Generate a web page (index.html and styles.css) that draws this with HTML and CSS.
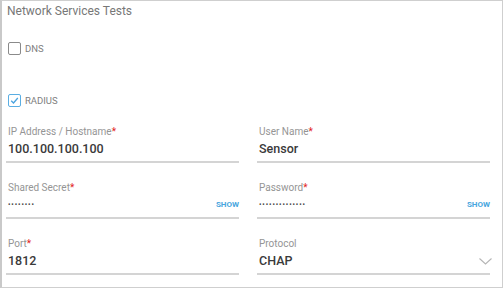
FILE: index.html
```html
<!DOCTYPE html>
<html>
<head>
<meta charset="utf-8">
<link rel="stylesheet" href="styles.css">
</head>
<body>
<div class="panel">
  <div class="title">Network Services Tests</div>
  <div class="check-row first">
    <span class="box"></span><span class="check-label">DNS</span>
  </div>
  <div class="check-row second">
    <span class="box checked"><svg viewBox="0 0 13 13" width="13" height="13"><path d="M3.2 6.8 L5.5 9 L9.8 4" fill="none" stroke="#4aa3df" stroke-width="1.3"/></svg></span><span class="check-label">RADIUS</span>
  </div>
  <div class="fields">
    <div class="field">
      <div class="label">IP Address / Hostname<span class="req">*</span></div>
      <div class="value">100.100.100.100</div>
    </div>
    <div class="field">
      <div class="label">User Name<span class="req">*</span></div>
      <div class="value">Sensor</div>
    </div>
    <div class="field">
      <div class="label">Shared Secret<span class="req">*</span></div>
      <div class="value"><span class="dots">••••••••</span><span class="show">SHOW</span></div>
    </div>
    <div class="field">
      <div class="label">Password<span class="req">*</span></div>
      <div class="value"><span class="dots">••••••••••••••</span><span class="show">SHOW</span></div>
    </div>
    <div class="field">
      <div class="label">Port<span class="req">*</span></div>
      <div class="value">1812</div>
    </div>
    <div class="field">
      <div class="label">Protocol</div>
      <div class="value">CHAP<svg class="chev" viewBox="0 0 13 7" width="13" height="7"><path d="M0.5 0.5 L6.5 6 L12.5 0.5" fill="none" stroke="#b5b5b5" stroke-width="1.1"/></svg></div>
    </div>
  </div>
</div>
</body>
</html>
```
FILE: styles.css
```css
html, body {
  margin: 0;
  padding: 0;
  background: #ffffff;
}
body {
  font-family: Roboto, "Liberation Sans", Arial, sans-serif;
}
.panel {
  box-sizing: border-box;
  width: 503px;
  height: 288px;
  border: 1px solid #cfcfcf;
  border-left: 2px solid #c9c9c9;
  padding: 2px 14px 0 4px;
}
.title {
  font-size: 12px;
  line-height: 16px;
  color: #777;
  padding-left: 1px;
}
.check-row {
  display: flex;
  align-items: center;
  gap: 4px;
  height: 13px;
  padding-left: 2px;
}
.check-row.first {
  margin-top: 23px;
}
.check-row.second {
  margin-top: 39px;
}
.box {
  box-sizing: border-box;
  width: 13px;
  height: 13px;
  border: 1.5px solid #8a8a8a;
  border-radius: 2px;
  display: flex;
  align-items: center;
  justify-content: center;
}
.box svg {
  display: block;
  flex: none;
}
.box.checked {
  border-color: #5aaee3;
}
.check-label {
  font-size: 9.5px;
  color: #808080;
  line-height: 13px;
}
.fields {
  display: grid;
  grid-template-columns: 233px 233px;
  column-gap: 18px;
  row-gap: 18px;
  margin-top: 18px;
}
.field {
  border-bottom: 2px solid #d4d4d4;
  padding-bottom: 4px;
}
.label {
  font-size: 10px;
  line-height: 13px;
  color: #959595;
  padding-left: 2px;
}
.req {
  color: #e2231a;
}
.value {
  margin-top: 3px;
  height: 16px;
  line-height: 16px;
  font-size: 12.5px;
  font-weight: 500;
  color: #3a3a3a;
  padding-left: 2px;
  display: flex;
  align-items: center;
  justify-content: space-between;
}
.dots {
  font-size: 7px;
  letter-spacing: 0.9px;
  color: #444;
}
.show {
  font-size: 8px;
  font-weight: 700;
  color: #48a6de;
}
.chev {
  display: block;
  margin-right: -2px;
}
```
